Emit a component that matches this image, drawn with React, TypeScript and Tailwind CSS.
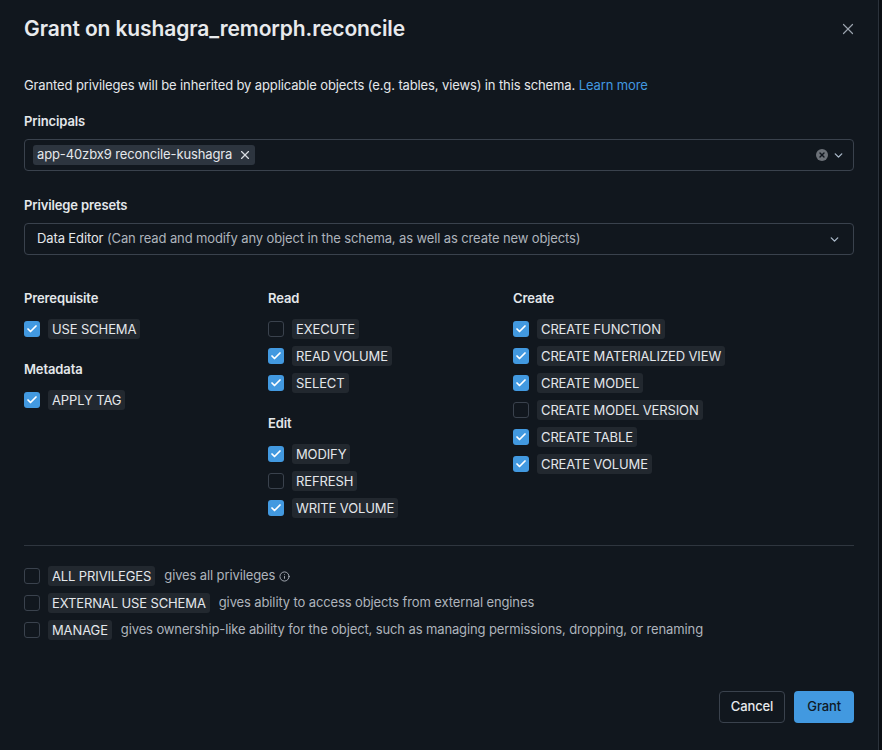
import React from "react";
import { X, ChevronDown, Check, Info } from "lucide-react";

type Priv = { label: string; checked: boolean };

const groups: { title: string; items: Priv[] }[][] = [
  [
    { title: "Prerequisite", items: [{ label: "USE SCHEMA", checked: true }] },
    { title: "Metadata", items: [{ label: "APPLY TAG", checked: true }] },
  ],
  [
    {
      title: "Read",
      items: [
        { label: "EXECUTE", checked: false },
        { label: "READ VOLUME", checked: true },
        { label: "SELECT", checked: true },
      ],
    },
    {
      title: "Edit",
      items: [
        { label: "MODIFY", checked: true },
        { label: "REFRESH", checked: false },
        { label: "WRITE VOLUME", checked: true },
      ],
    },
  ],
  [
    {
      title: "Create",
      items: [
        { label: "CREATE FUNCTION", checked: true },
        { label: "CREATE MATERIALIZED VIEW", checked: true },
        { label: "CREATE MODEL", checked: true },
        { label: "CREATE MODEL VERSION", checked: false },
        { label: "CREATE TABLE", checked: true },
        { label: "CREATE VOLUME", checked: true },
      ],
    },
  ],
];

function Box({ checked }: { checked: boolean }) {
  return checked ? (
    <span className="flex h-4 w-4 shrink-0 items-center justify-center rounded-[3px] bg-[#4299e0]">
      <Check className="h-3 w-3 text-white" strokeWidth={3.5} />
    </span>
  ) : (
    <span className="h-4 w-4 shrink-0 rounded-[3px] border border-[#3a424d] bg-[#11171e]" />
  );
}

function Chip({ children }: { children: React.ReactNode }) {
  return (
    <span className="rounded-[3px] bg-[#22282f] px-[4px] text-[13px] leading-[20px] text-[#e4e7eb]">
      {children}
    </span>
  );
}

function Row({ p }: { p: Priv }) {
  return (
    <div className="flex h-5 items-center gap-2">
      <Box checked={p.checked} />
      <Chip>{p.label}</Chip>
    </div>
  );
}

export default function App() {
  return (
    <div className="flex h-[750px] w-[882px] bg-[#0b0f14]" style={{ fontFamily: "Inter, 'Noto Sans', sans-serif" }}>
      <div className="flex h-full w-[879px] flex-col border-r border-[#2b323b] bg-[#11171e] px-6 tracking-[-0.12px] text-[#e4e7eb]">
        <div className="flex items-center justify-between pt-[16px]">
          <h2 className="text-[21px] font-semibold leading-[26px] tracking-[-0.1px] text-[#e8eaed]">
            Grant on kushagra_remorph.reconcile
          </h2>
          <X className="mr-[-3px] h-[18px] w-[18px] text-[#9aa3ad]" strokeWidth={1.6} />
        </div>

        <p className="mt-[34px] text-[13px] leading-[18px] text-[#e4e7eb]">
          Granted privileges will be inherited by applicable objects (e.g. tables, views) in this schema.{" "}
          <span className="text-[#4299e0]">Learn more</span>
        </p>

        <div className="mt-[18px] text-[13px] font-semibold leading-[18px]">Principals</div>
        <div className="mt-[9px] flex h-8 items-center justify-between rounded-[4px] border border-[#3a424d] pl-2 pr-2">
          <span className="flex h-5 items-center gap-[6px] rounded-[3px] bg-[#2d353f] pl-1 pr-[3px] text-[13px] text-[#e4e7eb]">
            app-40zbx9 reconcile-kushagra
            <X className="h-[14px] w-[14px] text-[#d7dbe0]" strokeWidth={2} />
          </span>
          <span className="flex items-center gap-[4px]">
            <span className="flex h-3 w-3 items-center justify-center rounded-full bg-[#6c7178]">
              <X className="h-[8px] w-[8px] text-[#11171e]" strokeWidth={4} />
            </span>
            <ChevronDown className="h-[13px] w-[13px] text-[#aab8c8]" strokeWidth={2.5} />
          </span>
        </div>

        <div className="mt-[25px] text-[13px] font-semibold leading-[18px]">Privilege presets</div>
        <div className="mt-[9px] flex h-8 items-center justify-between rounded-[4px] border border-[#3a424d] pl-3 pr-[12px] text-[13px]">
          <span>
            <span className="text-[#e4e7eb]">Data Editor</span>{" "}
            <span className="text-[#aeb4bc]">
              (Can read and modify any object in the schema, as well as create new objects)
            </span>
          </span>
          <ChevronDown className="h-[13px] w-[13px] text-[#aab8c8]" strokeWidth={2.5} />
        </div>

        <div className="mt-[34px] grid grid-cols-[244px_245px_1fr]">
          {groups.map((col, ci) => (
            <div key={ci} className="flex flex-col gap-[21px]">
              {col.map((g) => (
                <div key={g.title} className="flex flex-col">
                  <div className="text-[13px] font-semibold leading-[18px]">{g.title}</div>
                  <div className="mt-[12px] flex flex-col gap-[7px]">
                    {g.items.map((p) => (
                      <Row key={p.label} p={p} />
                    ))}
                  </div>
                </div>
              ))}
            </div>
          ))}
        </div>

        <div className="mt-[27px] h-px bg-[#2f363f]" />

        <div className="mt-[20px] flex flex-col gap-[7px] text-[13px]">
          <div className="flex h-5 items-center gap-2">
            <Box checked={false} />
            <Chip>ALL PRIVILEGES</Chip>
            <span className="ml-[1px] flex items-center gap-1 text-[#aeb4bc]">
              gives all privileges <Info className="h-[11px] w-[11px]" strokeWidth={2} />
            </span>
          </div>
          <div className="flex h-5 items-center gap-2">
            <Box checked={false} />
            <Chip>EXTERNAL USE SCHEMA</Chip>
            <span className="ml-[1px] text-[#aeb4bc]">gives ability to access objects from external engines</span>
          </div>
          <div className="flex h-5 items-center gap-2">
            <Box checked={false} />
            <Chip>MANAGE</Chip>
            <span className="ml-[1px] text-[#aeb4bc]">
              gives ownership-like ability for the object, such as managing permissions, dropping, or renaming
            </span>
          </div>
        </div>

        <div className="mt-[51px] flex justify-end gap-[9px]">
          <button className="h-8 rounded-[4px] border border-[#3a424d] px-[11px] text-[13px] font-medium text-[#e8eaed]">
            Cancel
          </button>
          <button className="h-8 rounded-[4px] bg-[#4299e0] px-[13px] text-[13px] font-medium text-[#0f1a26]">
            Grant
          </button>
        </div>
      </div>
    </div>
  );
}
